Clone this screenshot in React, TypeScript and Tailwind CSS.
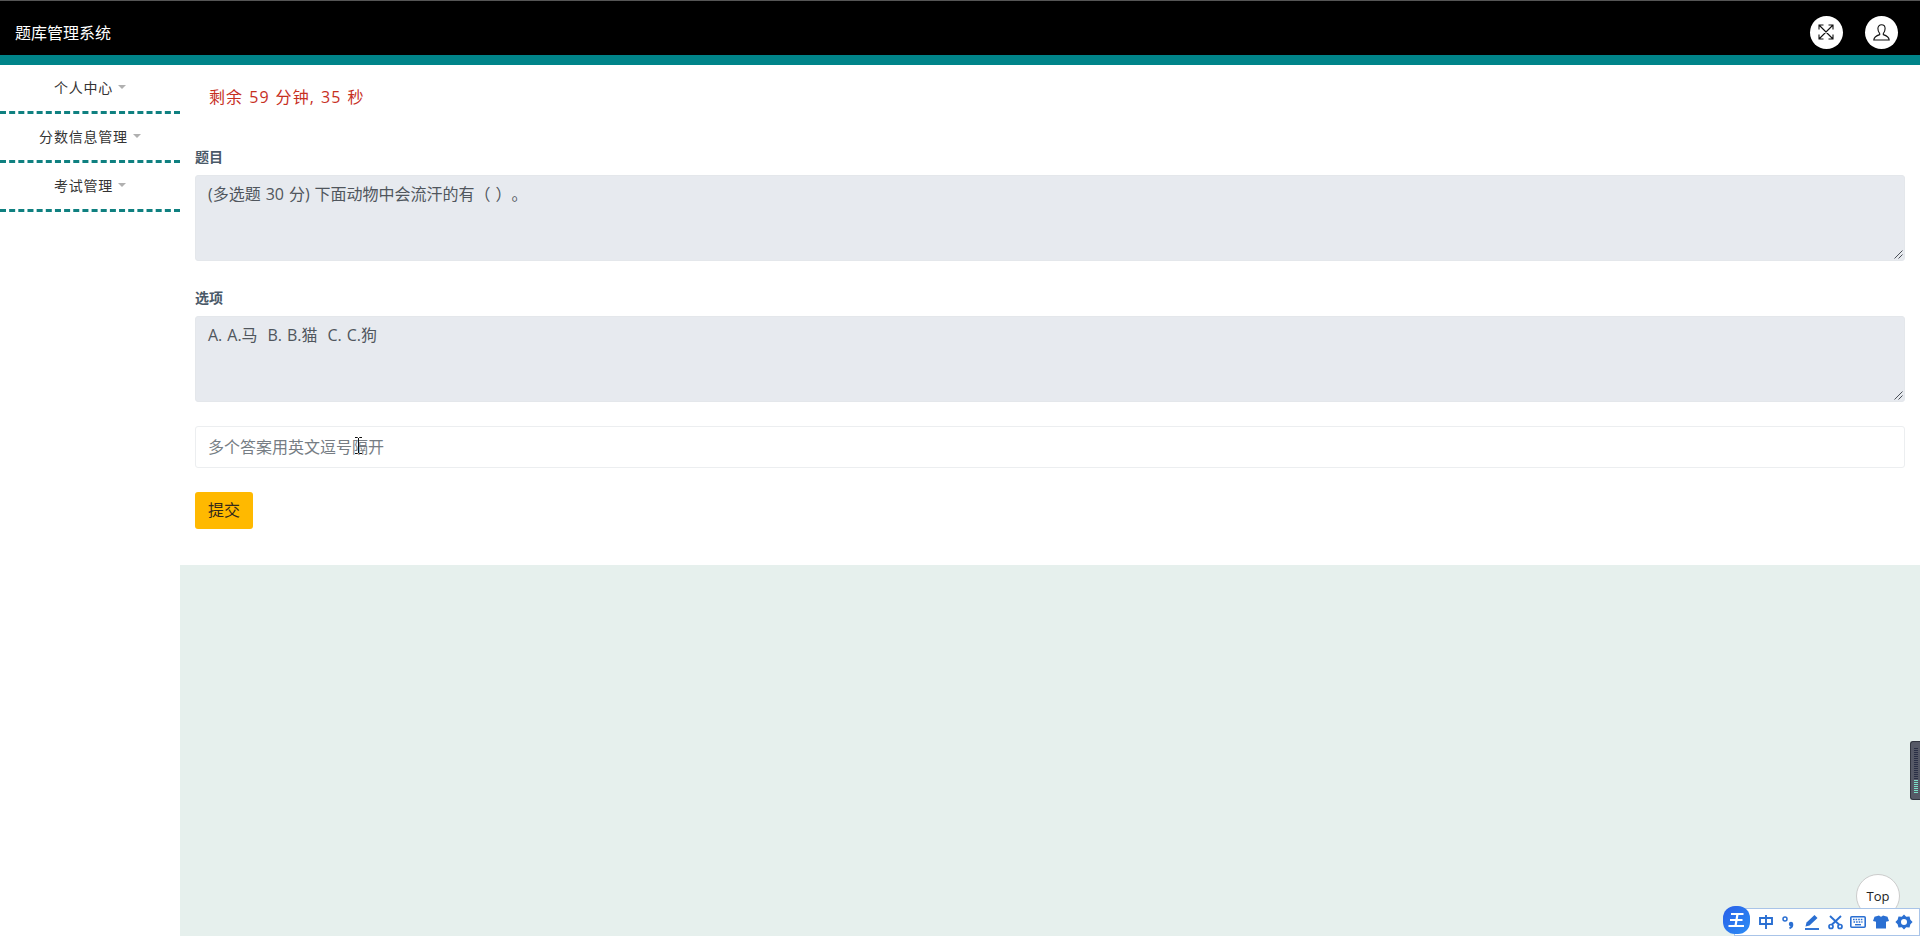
import { useState } from "react";

const menuItems = ["个人中心", "分数信息管理", "考试管理"];

const questionFields = [
  { label: "题目", value: "(多选题 30 分) 下面动物中会流汗的有（ ）。" },
  { label: "选项", value: "A. A.马  B. B.猫  C. C.狗" },
];

const ExpandIcon = () => (
  <svg className="-ml-px" width="16" height="16" viewBox="0 0 16 16" fill="none" stroke="#111" strokeWidth="1.1">
    <path d="M1.500 1.500l13 13M14.500 1.500l-13 13M1 5.500V1h4.500M10.500 1H15v4.500M15 10.500V15h-4.500M5.500 15H1v-4.500" />
  </svg>
);

const UserIcon = () => (
  <svg className="-ml-px" width="17" height="17" viewBox="0 0 17 17" fill="none" stroke="#111" strokeWidth="1.1">
    <path d="M6.700 9.600C5.200 8 4.900 6.200 4.900 4.600 4.900 2.300 6.400.8 8.500.8s3.600 1.500 3.600 3.800c0 1.600-.3 3.400-1.800 5v1c2.900.9 5.700 2 5.900 5.400H.8c.2-3.400 3-4.500 5.900-5.400z" />
  </svg>
);

// Small grip in the bottom right corner of the textareas
const ResizeGrip = () => (
  <svg className="absolute right-[2px] bottom-[2px]" width="9" height="9" viewBox="0 0 9 9" stroke="#4b5058" strokeWidth="1">
    <path d="M0.500 8.500L8.500 0.500M4.500 8.500L8.500 4.500" />
  </svg>
);

const Header = () => (
  <header className="h-[65px] border-t border-t-[#555] border-b-[10px] border-b-[#008489] bg-black flex items-center justify-between pl-[15px] pr-[22px]">
    <h1 className="text-white text-base leading-6 pt-[9px]">题库管理系统</h1>
    <div className="flex gap-[22px] pt-[8px]">
      <button className="size-[33px] rounded-full bg-white flex items-center justify-center">
        <ExpandIcon />
      </button>
      <button className="size-[33px] rounded-full bg-white flex items-center justify-center">
        <UserIcon />
      </button>
    </div>
  </header>
);

const Sidebar = () => (
  <nav className="w-[180px] shrink-0 bg-white">
    {menuItems.map((item) => (
      <a
        key={item}
        className="h-[49px] border-b-3 border-dashed border-[#0f8080] flex items-center justify-center text-sm tracking-[0.8px] text-[#333]"
      >
        {item}
        <span className="ml-[5px] mb-[3px] border-x-4 border-t-4 border-x-transparent border-t-[#b0b0b0]" />
      </a>
    ))}
  </nav>
);

const ImeBar = () => (
  <div className="absolute right-0 bottom-0 h-[28px] w-[186px] bg-white border border-[#a9c4e8] pl-[23px] flex items-center text-[#2a6fd2]">
    <div className="absolute -left-[12px] -top-[3px] w-[27px] h-[28px] rounded-[12px] bg-gradient-to-br from-[#2b5fe8] to-[#2c8df5] flex items-center justify-center">
      <svg width="17" height="16" viewBox="0 0 17 16" fill="none" stroke="#fff" strokeWidth="2.200">
        <path d="M3 2h12.500M2 8h12.500M.5 14H16M9.500 2L7.500 14" />
      </svg>
    </div>
    <svg width="160" height="22" viewBox="0 0 160 22" fill="none" stroke="currentColor" strokeWidth="1.900">
      <path d="M2 7h12v6H2zM8 4v14" />
      <circle cx="27" cy="8" r="2" strokeWidth="1.500" />
      <circle cx="33" cy="13" r="2.200" fill="currentColor" stroke="none" />
      <path d="M34.200 13c.3 2-.7 3.700-2.700 4.300" strokeWidth="2" />
      <path d="M47 18h14" />
      <path d="M47.500 15.500l1-4 8-7.500 3 3-8 7.500z" fill="currentColor" stroke="none" />
      <path d="M72 5l9.500 9M83 5l-9.500 9" />
      <circle cx="73" cy="15.500" r="2" strokeWidth="1.700" />
      <circle cx="82" cy="15.500" r="2" strokeWidth="1.700" />
      <rect x="92.800" y="5.800" width="14.400" height="10.400" rx="1" strokeWidth="1.600" />
      <path d="M95 8.500h10.500M95.500 11h9" strokeWidth="1.400" strokeDasharray="1.600 1" />
      <path d="M97 13.700h6" strokeWidth="1.400" />
      <path d="M121 4.500c1 1.500 3 1.500 4 0l4.500 1.200 1.500 4.300-3 .8v6.700h-10v-6.700l-3-.8 1.500-4.300z" fill="currentColor" stroke="none" />
      <path
        d="M146 3.500l2.200 2.300 3.300-.3.900 3.200 2.200 2.300-2.200 2.300-.9 3.200-3.300-.3-2.200 2.300-2.200-2.300-3.300.3-.9-3.200-2.200-2.300 2.200-2.300.9-3.200 3.300.3zM146 8a3 3 0 100 6 3 3 0 000-6z"
        fill="currentColor"
        fillRule="evenodd"
        stroke="none"
      />
    </svg>
  </div>
);

const LevelMeter = () => (
  <div className="absolute right-0 top-[741px] w-[10px] h-[59px] rounded-l-[3px] border border-r-0 border-[#30343f] bg-[#555966] flex flex-col gap-px pt-[6px] pl-[3px]">
    {Array.from({ length: 23 }, (_, i) => (
      <span key={i} className={i < 16 ? "w-1 h-px bg-[#292f45]" : "w-1 h-px bg-[#7be0c8]"} />
    ))}
  </div>
);

const App = () => {
  const [answer, setAnswer] = useState("");

  return (
    <div className="relative h-[936px] overflow-hidden flex flex-col bg-white font-['Open_Sans','Noto_Sans_CJK_SC',sans-serif] [text-spacing-trim:space-all]">
      <Header />
      <div className="flex flex-1">
        <Sidebar />
        <main className="flex-1 bg-[#e6f0ed]">
          <div className="h-[500px] bg-white px-[15px] pt-5">
            <p className="pl-[14px] text-base leading-6 tracking-[1.1px] [word-spacing:0.7px] text-[#c7301f]">剩余 59 分钟, 35 秒</p>
            <div className="pt-[37px] flex flex-col gap-[26px]">
              {questionFields.map((field) => (
                <div key={field.label}>
                  <label className="block text-sm leading-[21px] font-semibold text-[#4a5968] mb-[8px]">{field.label}</label>
                  <div className="relative">
                    <textarea
                      readOnly
                      value={field.value}
                      className="block w-full h-[86px] resize-none rounded-[3px] border border-[#e4e7eb] bg-[#e7eaef] px-3 py-[6px] text-base leading-6 [word-spacing:0.8px] text-[#50565d] outline-none [text-spacing-trim:space-all]"
                    />
                    <ResizeGrip />
                  </div>
                </div>
              ))}
              <input
                value={answer}
                onChange={(e) => setAnswer(e.target.value)}
                placeholder="多个答案用英文逗号隔开"
                className="-mt-[2px] h-[42px] w-full rounded-[3px] border border-[#eceef0] px-3 text-base text-[#495057] placeholder:text-[#767d84] outline-none"
              />
            </div>
            <button className="mt-6 block w-[58px] h-[37px] rounded-[3px] bg-[#ffb900] pb-px text-base text-[#33291a]">提交</button>
          </div>
        </main>
      </div>

      {/* Text cursor over the answer input */}
      <svg className="absolute left-[354px] top-[437px]" width="9" height="17" viewBox="0 0 9 17" fill="none" stroke="#111">
        <path d="M1 .5h2.500l1 1 1-1H8M4.500 1v15M1 16.500h2.500l1-1 1 1H8" />
      </svg>
      <LevelMeter />
      <button className="absolute right-[20px] top-[874px] size-[44px] rounded-full border border-[#ccc] bg-white pt-[2px] text-[13px] text-[#222]">Top</button>
      <ImeBar />
    </div>
  );
};

export default App;
